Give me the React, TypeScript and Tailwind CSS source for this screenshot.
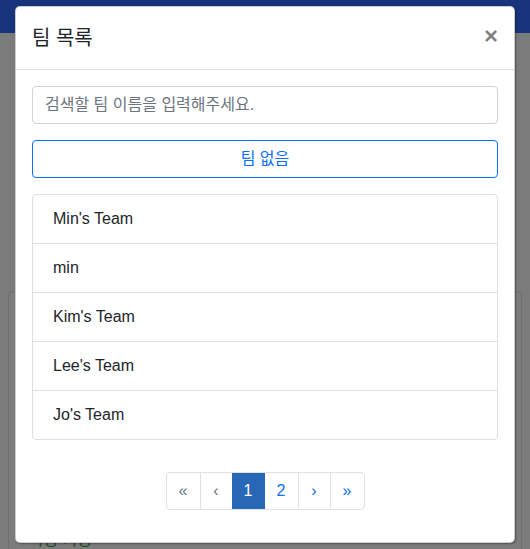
import React from 'react';

const teams = ["Min's Team", 'min', "Kim's Team", "Lee's Team", "Jo's Team"];

const font = { fontFamily: '"Liberation Sans", "Noto Sans CJK KR", sans-serif' };

const App: React.FC = () => {
  return (
    <div className="relative w-[530px] h-[549px] overflow-hidden bg-[#7b7b7b]" style={font}>
      {/* page behind the dialog, already dimmed */}
      <div className="h-[33px] bg-[#17337a]" />
      <div className="mx-2 mt-[258px] h-[300px] rounded border border-[#6f6f6f] bg-[#7c7c7c] px-5">
        <div className="mt-[236px] text-[16px] text-[#1e4d1e]">사용 가능</div>
      </div>

      {/* modal */}
      <div className="absolute left-[15px] top-[6px] w-[500px] rounded-[5px] border border-black/20 bg-white shadow-[1px_1px_2px_rgba(0,0,0,0.35)]">
        <div className="flex items-center justify-between border-b border-[#dee2e6] px-4 py-4">
          <h5 className="text-[20px] leading-[30px] font-normal text-[#212529]">팀 목록</h5>
          <button className="text-[24px] leading-none font-bold text-black/50 -mt-1">×</button>
        </div>

        <div className="px-4 pt-4 pb-[32px]">
          <input
            className="w-full h-[38px] rounded border border-[#ced4da] px-3 text-[16px] placeholder:text-[#6c757d] outline-none"
            placeholder="검색할 팀 이름을 입력해주세요."
          />
          <button className="mt-4 w-full h-[38px] rounded border border-[#0d6efd] text-[16px] text-[#0d6efd]">
            팀 없음
          </button>

          <ul className="mt-4 rounded border border-[#dfdfdf]">
            {teams.map((t, i) => (
              <li
                key={t}
                className={`px-5 py-3 text-[16px] leading-6 text-[#212529] ${i > 0 ? 'border-t border-[#dfdfdf]' : ''}`}
              >
                {t}
              </li>
            ))}
          </ul>

          <div className="mt-[32px] flex justify-center">
            <div className="flex rounded border border-[#dee2e6] text-[16px] leading-6">
              <span className="w-[33px] py-[6px] text-center text-[#6c757d]">«</span>
              <span className="w-[32px] py-[6px] text-center text-[#6c757d] border-l border-[#dee2e6]">‹</span>
              <span className="w-[33px] py-[6px] text-center text-white bg-[#2767b5]">1</span>
              <span className="w-[33px] py-[6px] text-center text-[#0d6efd]">2</span>
              <span className="w-[32px] py-[6px] text-center text-[#0d6efd] border-l border-[#dee2e6]">›</span>
              <span className="w-[34px] py-[6px] text-center text-[#0d6efd] border-l border-[#dee2e6]">»</span>
            </div>
          </div>
        </div>
      </div>
    </div>
  );
};

export default App;
